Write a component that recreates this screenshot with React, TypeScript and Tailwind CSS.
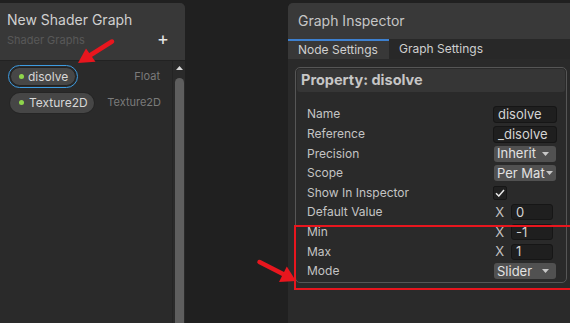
import React from "react";

const font = { fontFamily: "Inter, 'Noto Sans', sans-serif" };

function Caret() {
  return (
    <svg width="7" height="4" viewBox="0 0 7 4" className="shrink-0">
      <path d="M0 0 L7 0 L3.5 4 Z" fill="#c8c8c8" />
    </svg>
  );
}

function TextField({ value }: { value: string }) {
  return (
    <div className="w-[64px] h-[17px] bg-[#1f1f1f] border border-[#161616] rounded-[3px] pl-[4px] flex items-center text-[13px] text-[#d4d4d4] leading-none">
      {value}
    </div>
  );
}

function Dropdown({ value, tight }: { value: string; tight?: boolean }) {
  return (
    <div className="ml-[1px] w-[62px] h-[16px] bg-[#515151] rounded-[3px] pl-[3px] flex items-center text-[13px] text-[#e2e2e2] leading-none">
      <span className={tight ? "w-[48px] overflow-hidden whitespace-nowrap" : "flex-1 whitespace-nowrap"}>{value}</span>
      <span className={tight ? "ml-[1px]" : "mr-[7px]"}>
        <Caret />
      </span>
    </div>
  );
}

function VecField({ value }: { value: string }) {
  return (
    <div className="w-[64px] flex items-center justify-end pr-[4px]">
      <span className="text-[13px] text-[#c2c2c2] mr-[7px] leading-none">X</span>
      <div className="w-[42px] h-[16px] bg-[#1f1f1f] border border-[#161616] rounded-[3px] pl-[4px] flex items-center text-[13px] text-[#d4d4d4] leading-none">
        {value}
      </div>
    </div>
  );
}

function Row({ label, children }: { label: string; children: React.ReactNode }) {
  return (
    <div className="h-[19.6px] flex items-center justify-between pl-[10px] pr-[8px]">
      <span className="text-[12px] text-[#c4c4c4] leading-none">{label}</span>
      <div className="w-[64px] flex items-center">{children}</div>
    </div>
  );
}

function Pill({ label, selected }: { label: string; selected?: boolean }) {
  return (
    <div
      className={
        selected
          ? "rounded-full border border-[#3e9be0] p-[1px]"
          : "rounded-full border border-[#252525]"
      }
    >
      <div
        className={
          selected
            ? "h-[19px] rounded-full bg-[#474747] border border-[#222] flex items-center pl-[8px] pr-[7px]"
            : "h-[20px] rounded-full bg-[#464646] flex items-center pl-[9px] pr-[6px]"
        }
      >
        <span className={selected ? "w-[5px] h-[5px] rounded-full bg-[#8fd64c] mr-[4px]" : "w-[5px] h-[5px] rounded-full bg-[#8fd64c] mr-[5px]"} />
        <span className="text-[12px] text-[#d8d8d8] leading-none">{label}</span>
      </div>
    </div>
  );
}

export default function App() {
  return (
    <div style={font} className="relative w-[570px] h-[323px] overflow-hidden bg-[#202020] flex">
      {/* Left panel */}
      <div className="w-[185px] shrink-0 h-[320px] mt-[3px] rounded-tr-[5px] overflow-hidden flex flex-col bg-[#2a2a2a]">
        <div className="h-[58px] bg-[#383838] border-b border-[#222] px-[7px] pt-[7px] flex flex-col">
          <div className="text-[14px] text-[#d0d0d0] leading-[20px]">New Shader Graph</div>
          <div className="flex items-center justify-between mt-[3px]">
            <span className="text-[11px] text-[#585858] leading-none">Shader Graphs</span>
            <span className="text-[18px] text-[#e6e6e6] leading-none mr-[9px] -mt-[3px]">+</span>
          </div>
        </div>
        <div className="flex-1 flex">
          <div className="flex-1 min-w-0 flex flex-col pt-[3px]">
            <div className="flex items-center justify-between pl-[8px] pr-[12px] h-[25px]">
              <Pill label="disolve" selected />
              <span className="text-[11px] text-[#7b7b7b] leading-none">Float</span>
            </div>
            <div className="flex items-center justify-between pl-[9px] pr-[11px] h-[27px]">
              <Pill label="Texture2D" />
              <span className="text-[11px] text-[#7b7b7b] leading-none">Texture2D</span>
            </div>
          </div>
          <div className="w-[13px] shrink-0 border-l border-[#242424] bg-[#2a2a2a] flex flex-col items-center pt-[5px]">
            <svg width="7" height="4" viewBox="0 0 7 4">
              <path d="M0 4 L7 4 L3.5 0 Z" fill="#d8d8d8" />
            </svg>
            <div className="mt-[8px] w-[9px] flex-1 bg-[#5e5e5e] rounded-t-[5px]" />
          </div>
        </div>
      </div>

      {/* Right panel */}
      <div className="ml-[103px] flex-1 h-[320px] mt-[3px] rounded-tl-[5px] overflow-hidden flex flex-col bg-[#2a2a2a]">
        <div className="h-[36px] bg-[#393939] px-[10px] flex items-center">
          <span className="text-[14px] text-[#c6c6c6] leading-none">Graph Inspector</span>
        </div>
        <div className="h-[20px] flex bg-[#282828]">
          <div className="w-[101px] bg-[#383838] border-t-2 border-[#3d80cf] pl-[10px] flex items-center">
            <span className="text-[12px] text-[#d0d0d0] leading-none">Node Settings</span>
          </div>
          <div className="pl-[10px] flex items-center">
            <span className="text-[12px] text-[#cfcfcf] leading-none">Graph Settings</span>
          </div>
        </div>
        <div className="pt-[8px] pl-[7px] pr-[3px]">
          <div className="h-[216px] border border-[#565656] rounded-[5px] p-[1px] flex flex-col">
            <div className="h-[23px] bg-[#363636] rounded-[3px] px-[4px] flex items-center">
              <span className="text-[14.5px] font-bold text-[#c6c6c6] leading-none">Property: disolve</span>
            </div>
            <div className="pt-[13px] flex flex-col">
              <Row label="Name">
                <TextField value="disolve" />
              </Row>
              <Row label="Reference">
                <TextField value="_disolve" />
              </Row>
              <Row label="Precision">
                <Dropdown value="Inherit" />
              </Row>
              <Row label="Scope">
                <Dropdown value="Per Material" tight />
              </Row>
              <Row label="Show In Inspector">
                <div className="w-[14px] h-[14px] bg-[#202020] border border-[#161616] rounded-[2px] flex items-center justify-center">
                  <svg width="10" height="8" viewBox="0 0 10 8">
                    <path d="M1 4.2 L3.8 7 L9 1" stroke="#e6e6e6" strokeWidth="1.5" fill="none" />
                  </svg>
                </div>
              </Row>
              <Row label="Default Value">
                <VecField value="0" />
              </Row>
              <Row label="Min">
                <VecField value="-1" />
              </Row>
              <Row label="Max">
                <VecField value="1" />
              </Row>
              <Row label="Mode">
                <Dropdown value="Slider" />
              </Row>
            </div>
          </div>
        </div>
      </div>

      {/* Annotation overlays */}
      <div className="absolute left-[294px] top-[225px] w-[290px] h-[65px] border-2 border-[#e8161e]" />
      <svg className="absolute left-0 top-0" width="570" height="323" viewBox="0 0 570 323">
        <line x1="112" y1="41.5" x2="89" y2="56" stroke="#e8161e" strokeWidth="4.5" strokeLinecap="round" />
        <path d="M78 63 L95.5 61.8 L86 48.6 Z" fill="#e8161e" />
        <line x1="259.5" y1="262" x2="284" y2="274.5" stroke="#e8161e" strokeWidth="4.5" strokeLinecap="round" />
        <path d="M296 281 L279 282 L286.8 266.5 Z" fill="#e8161e" />
      </svg>
    </div>
  );
}
